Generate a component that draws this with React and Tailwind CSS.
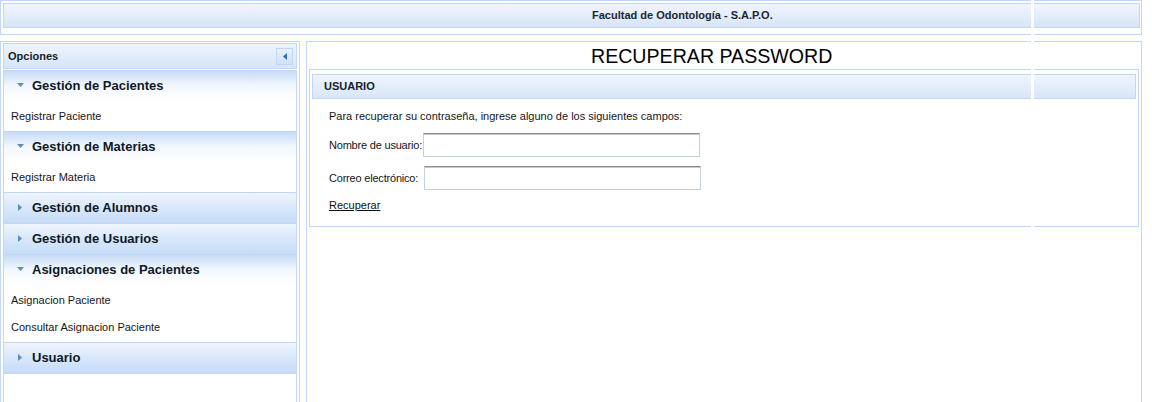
import React from "react";

const line = "border-[#c1d7f5]";

function Arrow({ open }) {
  return open ? (
    <svg width="7" height="4" viewBox="0 0 7 4" className="shrink-0">
      <path d="M0 0 H7 L3.5 4 Z" fill="#5a8cc2" />
    </svg>
  ) : (
    <svg width="4" height="7" viewBox="0 0 4 7" className="shrink-0 ml-[1px] mr-[2px]">
      <path d="M0 0 L4 3.5 L0 7 Z" fill="#5a8cc2" />
    </svg>
  );
}

function Section({ title, open, items = [] }) {
  return (
    <div>
      <div
        className={`h-[31px] border-t ${line} flex items-center pl-[13px] pb-[2px] gap-[8px] ${
          open
            ? "bg-gradient-to-b from-[#c6dbf8] via-[#f4f8fe] to-white"
            : "bg-gradient-to-b from-[#eef4fd] to-[#c5dbf8]"
        }`}
      >
        <Arrow open={open} />
        <span className="text-[13px] font-bold text-[#0d1926] leading-none">{title}</span>
      </div>
      {open && (
        <div className="pt-[7px] pb-[6px] pl-[7px] flex flex-col gap-[10px] bg-white">
          {items.map((it) => (
            <div key={it} className="h-[17px] leading-[17px] text-[11px] text-[#161616]">
              {it}
            </div>
          ))}
        </div>
      )}
    </div>
  );
}

export default function App() {
  return (
    <div className="relative w-[1152px] h-[402px] overflow-hidden bg-white font-['Liberation_Sans',Arial,sans-serif]">
      {/* top bar */}
      <div className={`w-[1142px] border ${line} pt-[2px] pb-[6px] pl-[2px] pr-[1px]`}>
        <div
          className={`h-[25px] border ${line} bg-gradient-to-b from-[#f1f5fe] to-[#d7e5f8] flex items-center pl-[588px]`}
        >
          <span className="text-[11px] font-bold text-[#1b2633]">Facultad de Odontología - S.A.P.O.</span>
        </div>
      </div>

      <div className="flex gap-[6px] mt-[6px]">
        {/* sidebar */}
        <div className={`w-[300px] h-[380px] border ${line} px-[2px] pt-[1px] flex flex-col`}>
          <div
            className={`h-[26px] border ${line} bg-gradient-to-b from-[#eff4fd] to-[#d6e5f8] flex items-center justify-between pl-[4px] pr-[3px]`}
          >
            <span className="text-[11px] font-bold text-[#141e2a]">Opciones</span>
            <div
              className={`w-[17px] h-[17px] border ${line} bg-gradient-to-b from-[#e8f0fc] to-[#cfe1f9] flex items-center justify-center`}
            >
              <svg width="4" height="7" viewBox="0 0 4 7">
                <path d="M4 0 L0 3.5 L4 7 Z" fill="#336db3" />
              </svg>
            </div>
          </div>
          <div className={`mt-[1px] flex-1 border-x ${line} border-b`}>
            <Section title="Gestión de Pacientes" open items={["Registrar Paciente"]} />
            <Section title="Gestión de Materias" open items={["Registrar Materia"]} />
            <Section title="Gestión de Alumnos" />
            <Section title="Gestión de Usuarios" />
            <Section
              title="Asignaciones de Pacientes"
              open
              items={["Asignacion Paciente", "Consultar Asignacion Paciente"]}
            />
            <div className={`border-b ${line}`}>
              <Section title="Usuario" />
            </div>
          </div>
        </div>

        {/* content */}
        <div className={`w-[836px] h-[380px] border ${line} px-[2px]`}>
          <div className="h-[27px] pt-[3px] pl-[282px] text-[19.6px] leading-[23px] text-black">
            RECUPERAR PASSWORD
          </div>
          <div className={`border ${line} px-[2px] pt-[4px] pb-[14px]`}>
            <div
              className={`h-[25px] border ${line} bg-gradient-to-b from-[#f0f5fe] to-[#d8e6f8] flex items-center pl-[11px]`}
            >
              <span className="text-[11px] font-bold text-[#141e2a]">USUARIO</span>
            </div>
            <div className="pl-[17px] pt-[11px] text-[11px] text-[#161616]">
              <div className="leading-[13px]">Para recuperar su contraseña, ingrese alguno de los siguientes campos:</div>
              <div className="mt-[10px] flex items-center h-[24px]">
                <span className="w-[94px] shrink-0 whitespace-nowrap tracking-[-0.2px]">Nombre de usuario:</span>
                <input
                  className="w-[277px] h-[24px] border border-[#c3d1e1] border-t-[#8c8c8c] shadow-[inset_0_1px_0_#c8c8c8] bg-white outline-none"
                />
              </div>
              <div className="mt-[9px] flex items-center h-[24px]">
                <span className="w-[95px] shrink-0 whitespace-nowrap tracking-[-0.2px]">Correo electrónico:</span>
                <input
                  className="w-[277px] h-[24px] border border-[#c3d1e1] border-t-[#8c8c8c] shadow-[inset_0_1px_0_#c8c8c8] bg-white outline-none"
                />
              </div>
              <div className="mt-[9px] leading-[13px]">
                <a href="#" className="underline text-[#111]">
                  Recuperar
                </a>
              </div>
            </div>
          </div>
        </div>
      </div>

      {/* white stripe artefact */}
      <div className="absolute left-[1031px] top-0 w-[3px] h-[229px] bg-white" />
    </div>
  );
}
